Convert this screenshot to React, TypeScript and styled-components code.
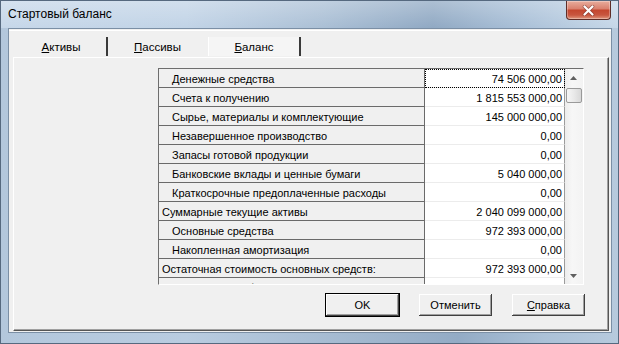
import React from "react";
import styled, { createGlobalStyle } from "styled-components";

const GlobalStyle = createGlobalStyle`
  html, body { margin: 0; padding: 0; background: #ffffff; }
  body { font-family: "Liberation Sans", Arial, sans-serif; color: #000; }
  * { box-sizing: border-box; }
`;

const Window = styled.div`
  width: 619px;
  height: 344px;
  display: flex;
  flex-direction: column;
  border: 1px solid #56697f;
  background: linear-gradient(
    to right,
    #b3c7dc 0%,
    #b9cce0 30%,
    #a2b8cf 58%,
    #93abc5 74%,
    #abc1d7 88%,
    #b7cadd 100%
  );
  overflow: hidden;
`;

const TitleBar = styled.div`
  height: 27px;
  flex: none;
  display: flex;
  align-items: flex-start;
  background: linear-gradient(to bottom, rgba(255, 255, 255, 0.3), rgba(255, 255, 255, 0.05)),
    linear-gradient(
      to right,
      #c3d5e8 0%,
      #bed1e5 30%,
      #a6bcd3 52%,
      #8aa4c0 70%,
      #a4bcd5 84%,
      #c3d5e7 100%
    );
`;

const Title = styled.div`
  padding-left: 7px;
  line-height: 27px;
  font-size: 12px;
  color: #000;
`;

const CloseButton = styled.div`
  margin-left: auto;
  margin-right: 7px;
  width: 45px;
  height: 19px;
  display: flex;
  align-items: center;
  justify-content: center;
  border: 1px solid #5e2d27;
  border-top: none;
  border-radius: 0 0 4px 4px;
  background: linear-gradient(
    to bottom,
    #e8ad9d 0%,
    #da826f 42%,
    #c4472f 52%,
    #c8563f 78%,
    #e0977d 100%
  );
  box-shadow: inset 0 0 0 1px rgba(255, 255, 255, 0.3);
`;

const Client = styled.div`
  flex: 1;
  margin: 0 6px 10px 7px;
  background: #f0f0f0;
  border: 1px solid #7b8fa5;
  display: flex;
  flex-direction: column;
`;

const TabRow = styled.div`
  margin-top: 1px;
  height: 27px;
  flex: none;
  display: flex;
  padding-left: 6px;
  border-top: 1px solid #ffffff;
`;

const Tab = styled.div<{ $w: number; $selected?: boolean; $sep?: boolean }>`
  width: ${(p) => p.$w}px;
  margin-top: 6px;
  height: 19px;
  display: flex;
  align-items: center;
  justify-content: center;
  font-size: 11.5px;
  padding-top: 1px;
  background: ${(p) => (p.$selected ? "#f5f5f5" : "transparent")};
  border-left: 1px solid ${(p) => (p.$selected ? "#ffffff" : "transparent")};
  border-right: 2px solid ${(p) => (p.$sep ? "#3a3a3a" : "transparent")};
`;

const Mnemonic = styled.span`
  text-decoration: underline;
  text-underline-offset: 1px;
`;

const Panel = styled.div`
  flex: 1;
  margin: 0 2px 1px 4px;
  border-top: 1px solid #ffffff;
  border-left: 1px solid #ffffff;
  border-right: 1px solid #555555;
  border-bottom: 1px solid #555555;
  box-shadow: inset -1px -1px 0 #a0a0a0;
  padding: 10px 22px 0 144px;
  display: flex;
  flex-direction: column;
`;

const StringGrid = styled.div`
  width: 426px;
  height: 217px;
  flex: none;
  display: flex;
  border-top: 1px solid #6e6e6e;
  border-left: 1px solid #6e6e6e;
  border-right: 1px solid #ffffff;
  border-bottom: 1px solid #ffffff;
  background: #ffffff;
`;

const Rows = styled.div`
  width: 406px;
  display: flex;
  flex-direction: column;
  overflow: hidden;
`;

const Row = styled.div`
  height: 19px;
  flex: none;
  display: flex;
`;

const LabelCell = styled.div<{ $indent?: boolean }>`
  width: 266px;
  background: #f0f0f0;
  border-right: 1px solid #6a6a6a;
  border-bottom: 1px solid #6a6a6a;
  padding-left: ${(p) => (p.$indent ? 13 : 3)}px;
  font-size: 11px;
  line-height: 20px;
  white-space: nowrap;
  overflow: hidden;
`;

const ValueCell = styled.div<{ $focused?: boolean }>`
  width: 140px;
  background: #ffffff;
  border-right: 1px solid #9c9c9c;
  border-bottom: 1px solid #ececec;
  padding-right: 2px;
  text-align: right;
  font-size: 11px;
  line-height: 20px;
  white-space: nowrap;
  overflow: hidden;
  outline: ${(p) => (p.$focused ? "1px dotted #000" : "none")};
  outline-offset: -1px;
`;

const ScrollBar = styled.div`
  width: 18px;
  display: flex;
  flex-direction: column;
  background: linear-gradient(to right, #ededed, #f7f7f7 40%, #f3f3f3);
`;

const ArrowButton = styled.div`
  height: 17px;
  flex: none;
  display: flex;
  align-items: center;
  justify-content: center;
  padding-right: 1px;
`;

const Track = styled.div`
  flex: 1;
  display: flex;
  flex-direction: column;
  padding-top: 2px;
`;

const Thumb = styled.div`
  height: 15px;
  margin: 0 1px;
  border: 1px solid #9a9a9a;
  border-radius: 2px;
  background: linear-gradient(to right, #f6f6f6 0%, #e9e9e9 50%, #d8d8d8 100%);
`;

const ButtonRow = styled.div`
  margin-top: 8px;
  display: flex;
  justify-content: flex-end;
  gap: 18px;
`;

const Button = styled.div<{ $default?: boolean }>`
  width: 75px;
  height: 24px;
  display: flex;
  align-items: center;
  justify-content: center;
  font-size: 11px;
  background: #f0f0f0;
  border: 1px solid ${(p) => (p.$default ? "#000000" : "#f0f0f0")};
  box-shadow: inset -1px -1px 0 #404040, inset 1px 1px 0 #ffffff, inset -2px -2px 0 #a0a0a0;
`;

type Item = { label: string; value: string; indent: boolean };

const items: Item[] = [
  { label: "Денежные средства", value: "74 506 000,00", indent: true },
  { label: "Счета к получению", value: "1 815 553 000,00", indent: true },
  { label: "Сырье, материалы и комплектующие", value: "145 000 000,00", indent: true },
  { label: "Незавершенное производство", value: "0,00", indent: true },
  { label: "Запасы готовой продукции", value: "0,00", indent: true },
  { label: "Банковские вклады и ценные бумаги", value: "5 040 000,00", indent: true },
  { label: "Краткосрочные предоплаченные расходы", value: "0,00", indent: true },
  { label: "Суммарные текущие активы", value: "2 040 099 000,00", indent: false },
  { label: "Основные средства", value: "972 393 000,00", indent: true },
  { label: "Накопленная амортизация", value: "0,00", indent: true },
  { label: "Остаточная стоимость основных средств:", value: "972 393 000,00", indent: false },
  { label: "Долгосрочные финансовые вложения", value: "968 640 000,00", indent: true },
];

const CloseIcon = () => (
  <svg width="13" height="11" viewBox="0 0 13 11">
    <path d="M2.5 1.5 L10.5 9.5 M10.5 1.5 L2.5 9.5" stroke="#6a2a22" strokeWidth="3.6" strokeLinecap="round" opacity="0.55" />
    <path d="M2.5 1.5 L10.5 9.5 M10.5 1.5 L2.5 9.5" stroke="#ffffff" strokeWidth="2.2" strokeLinecap="round" />
  </svg>
);

const UpArrow = () => (
  <svg width="7" height="4" viewBox="0 0 7 4">
    <path d="M0 4 L3.5 0 L7 4 Z" fill="#606060" />
  </svg>
);

const DownArrow = () => (
  <svg width="7" height="4" viewBox="0 0 7 4">
    <path d="M0 0 L3.5 4 L7 0 Z" fill="#606060" />
  </svg>
);

export default function App() {
  return (
    <>
      <GlobalStyle />
      <Window>
        <TitleBar>
          <Title>Стартовый баланс</Title>
          <CloseButton>
            <CloseIcon />
          </CloseButton>
        </TitleBar>
        <Client>
          <TabRow>
            <Tab $w={93} $sep>
              <Mnemonic>А</Mnemonic>ктивы
            </Tab>
            <Tab $w={100}>
              <Mnemonic>П</Mnemonic>ассивы
            </Tab>
            <Tab $w={93} $selected $sep>
              <Mnemonic>Б</Mnemonic>аланс
            </Tab>
          </TabRow>
          <Panel>
            <StringGrid>
              <Rows>
                {items.map((it, i) => (
                  <Row key={i}>
                    <LabelCell $indent={it.indent}>{it.label}</LabelCell>
                    <ValueCell $focused={i === 0}>{it.value}</ValueCell>
                  </Row>
                ))}
              </Rows>
              <ScrollBar>
                <ArrowButton>
                  <UpArrow />
                </ArrowButton>
                <Track>
                  <Thumb />
                </Track>
                <ArrowButton>
                  <DownArrow />
                </ArrowButton>
              </ScrollBar>
            </StringGrid>
            <ButtonRow>
              <Button $default>OK</Button>
              <Button>Отменить</Button>
              <Button>
                <span>
                  <Mnemonic>С</Mnemonic>правка
                </span>
              </Button>
            </ButtonRow>
          </Panel>
        </Client>
      </Window>
    </>
  );
}
